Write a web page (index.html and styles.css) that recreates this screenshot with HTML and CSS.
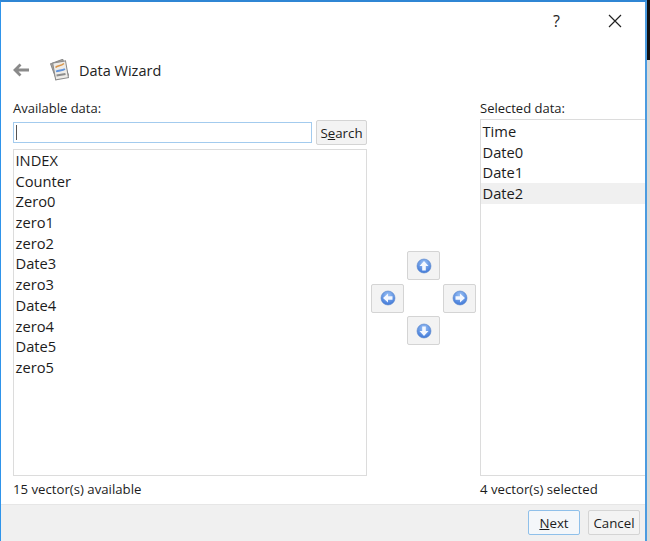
FILE: index.html
```html
<!DOCTYPE html>
<html lang="en">
<head>
<meta charset="utf-8">
<title>Data Wizard</title>
<link rel="stylesheet" href="styles.css">
</head>
<body>
<div class="screen">
  <main class="window">
    <div class="titlebar">
      <span class="help">?</span>
      <svg class="close" width="14" height="14" viewBox="0 0 14 14"><path d="M1 1l12 12M13 1L1 13" stroke="#222" stroke-width="1.2" fill="none"/></svg>
    </div>
    <div class="wizard-head">
      <svg class="back" width="16" height="14" viewBox="0 0 16 14"><path d="M7.500 1.500L2 7l5.500 5.500M2.500 7H16" stroke="#8a8a8a" stroke-width="2.800" fill="none"/></svg>
      <svg class="logo" width="20" height="22" viewBox="0 0 20 22">
        <rect x="3" y="2" width="13" height="17" fill="#a9a69f" stroke="#8a8a8a" transform="rotate(-20 9.500 10.500)"/>
        <rect x="4" y="3" width="13" height="17" fill="#eeece8" stroke="#8b8b8b" transform="rotate(-10 10 11)"/>
        <path d="M5.500 8.500c2-2.500 5-1 8.500-4" stroke="#d9954a" stroke-width="1.500" fill="none"/>
        <path d="M6 12.500c3-1.500 6-.5 9-2.500" stroke="#5f93dc" stroke-width="1.800" fill="none"/>
        <path d="M6.500 16.500l9-1.500" stroke="#8c8c8c" stroke-width="2" fill="none"/>
      </svg>
      <h1 class="title">Data Wizard</h1>
    </div>
    <div class="columns">
      <section class="col-left">
        <div class="label label-left">Available data:</div>
        <div class="search-row">
          <div class="search-input"><span class="caret"></span></div>
          <button class="btn search-btn"><span>S<u>e</u>arch</span></button>
        </div>
        <ul class="list list-left">
          <li>INDEX</li><li>Counter</li><li>Zero0</li><li>zero1</li><li>zero2</li><li>Date3</li><li>zero3</li><li>Date4</li><li>zero4</li><li>Date5</li><li>zero5</li>
        </ul>
        <div class="count">15 vector(s) available</div>
      </section>
      <section class="col-mid">
        <div class="arrows">
          <button class="btn arrow up"><svg width="16" height="16" viewBox="0 0 16 16"><use href="#disc"/><path d="M8 3L12.500 8H9.800v4.500H6.200V8H3.500z" fill="#f4f8ff"/></svg></button>
          <button class="btn arrow left"><svg width="16" height="16" viewBox="0 0 16 16"><use href="#disc"/><path d="M3 8l5-4.500v2.700h4.500v3.600H8v2.700z" fill="#f4f8ff"/></svg></button>
          <button class="btn arrow right"><svg width="16" height="16" viewBox="0 0 16 16"><use href="#disc"/><path d="M13 8L8 3.500v2.700H3.500v3.600H8v2.700z" fill="#f4f8ff"/></svg></button>
          <button class="btn arrow down"><svg width="16" height="16" viewBox="0 0 16 16"><use href="#disc"/><path d="M8 13l4.500-5H9.800V3.500H6.200V8H3.500z" fill="#f4f8ff"/></svg></button>
        </div>
      </section>
      <section class="col-right">
        <div class="label">Selected data:</div>
        <ul class="list list-right">
          <li>Time</li><li>Date0</li><li>Date1</li><li class="current">Date2</li>
        </ul>
        <div class="count">4 vector(s) selected</div>
      </section>
    </div>
    <footer class="footer">
      <button class="btn action default"><span><u>N</u>ext</span></button>
      <button class="btn action">Cancel</button>
    </footer>
  </main>
  <div class="outside"><div class="outside-dark"></div></div>
</div>
<svg class="defs" width="0" height="0"><defs>
  <radialGradient id="g" cx="50%" cy="30%" r="70%"><stop offset="0" stop-color="#9cc2f5"/><stop offset="1" stop-color="#3f78d8"/></radialGradient>
  <circle id="disc" cx="8" cy="8" r="7" fill="url(#g)" stroke="#5a87c9" stroke-width=".6"/>
</defs></svg>
</body>
</html>
```
FILE: styles.css
```css
* { box-sizing: border-box; }
html, body { margin: 0; height: 100%; }
body { background: #fff; font-family: "Open Sans", "Noto Sans", sans-serif; color: #1c1c1c; overflow: hidden; }
.screen { display: flex; width: 650px; height: 541px; }
.window { width: 647px; height: 541px; flex: none; display: flex; flex-direction: column; background: #fff; border-top: 2px solid #2f86d4; border-left: 1px solid #2f94ea; border-right: 2px solid #4a9be0; }
.outside { flex: 1; background: #d9d9d9; }
.outside-dark { height: 60px; background: #111; }
.defs { position: absolute; }

.titlebar { height: 38px; flex: none; position: relative; display: flex; align-items: center; justify-content: flex-end; padding-right: 23px; gap: 48px; }
.help { font-size: 16px; line-height: 20px; color: #222; }
.close { display: block; }

.wizard-head { height: 34px; margin-top: 13px; flex: none; display: flex; align-items: center; padding-left: 12px; }
.back { margin-right: 21px; }
.logo { margin-right: 9px; }
.title { margin: 0; font-size: 14.500px; font-weight: 400; color: #222; }

.columns { flex: 1; display: flex; padding: 10px 0 0 12px; min-height: 0; }
.col-left { width: 354px; flex: none; display: flex; flex-direction: column; }
.col-mid { width: 113px; flex: none; display: flex; align-items: center; justify-content: center; padding-bottom: 5px; }
.col-right { flex: 1; min-width: 0; display: flex; flex-direction: column; }

.label { font-size: 13px; line-height: 18px; height: 18px; margin-top: 2px; }
.label-left { margin-bottom: 3px; }
.search-row { display: flex; gap: 4px; height: 25px; align-items: center; flex: none; }
.search-input { width: 299px; height: 21px; border: 1px solid #a3cbee; background: #fff; padding: 2px 0 0 2px; }
.caret { display: block; width: 1px; height: 15px; background: #555; }
.search-btn { width: 51px; height: 25px; }

.btn { border: 1px solid #d4d4d4; border-radius: 2px; background: #f3f3f3; font-family: inherit; font-size: 13.300px; color: #1c1c1c; padding: 0; display: flex; align-items: center; justify-content: center; }

.list { list-style: none; margin: 0; padding: 0; flex: 1; border: 1px solid #dcdcdc; min-height: 0; font-size: 14.700px; }
.list-left { margin-top: 4px; }
.list-right { margin-top: 2px; padding-top: 1px; border-right: 0; }
.list li { height: 20.700px; line-height: 20.700px; padding-left: 1.500px; white-space: nowrap; }
.list .current { background: #f0f0f0; }
.count { height: 28px; line-height: 26px; font-size: 13.200px; flex: none; }

.arrows { display: grid; grid-template-columns: repeat(3, 33px); grid-template-rows: repeat(3, 29px); column-gap: 3px; row-gap: 3.500px; }
.arrow svg { display: block; }
.up { grid-column: 2; grid-row: 1; }
.left { grid-column: 1; grid-row: 2; }
.right { grid-column: 3; grid-row: 2; }
.down { grid-column: 2; grid-row: 3; }

.footer { height: 37px; flex: none; display: flex; justify-content: flex-end; align-items: center; gap: 8px; padding-right: 5px; padding-bottom: 1px; background: #f0f0f0; border-top: 1px solid #e6e6e6; }
.action { width: 52px; height: 25px; }
.default { border-color: #8fc0ea; background: #f4f7fa; }
```
